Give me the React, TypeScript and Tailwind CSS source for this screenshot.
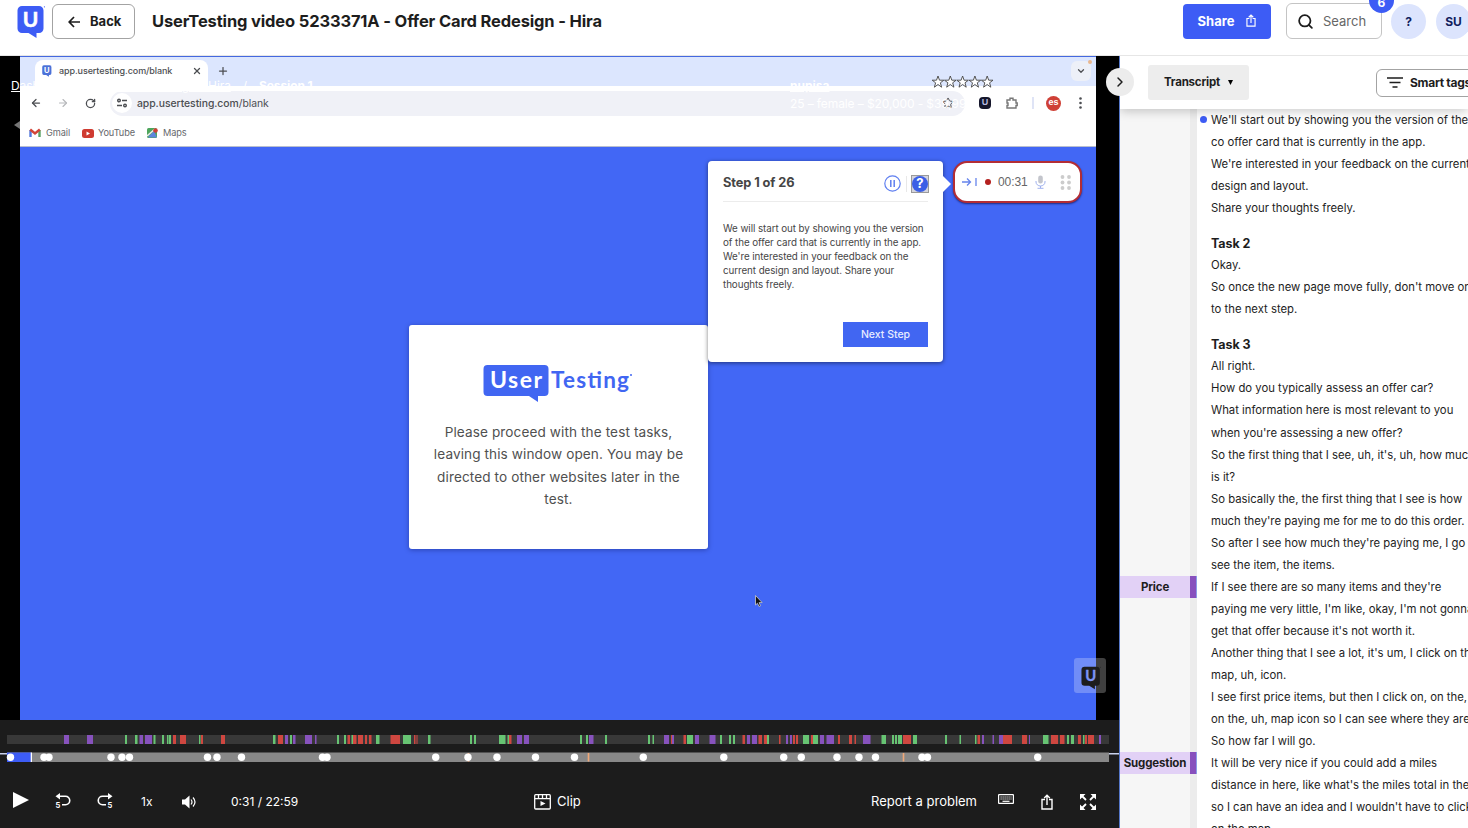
import { ArrowLeft, ArrowRight, ChevronDown, ChevronRight, Mic, Plus, RotateCw, Search, Star, X } from "lucide-react";

const COLORS: Record<string, string> = { g: "#67c473", r: "#cf4740", p: "#8752bd" };

// [kind, start, end]
const SEGMENTS: [string, number, number][] = [
  ["p", 64, 69], ["p", 87, 93], ["g", 125, 127], ["g", 135, 137.5], ["p", 139.5, 143], ["p", 145, 152],
  ["g", 153.5, 155.5], ["g", 162, 164], ["g", 167, 168.5], ["g", 169, 171], ["r", 173, 176], ["r", 180, 186],
  ["g", 199, 200.5], ["r", 201, 203], ["r", 221, 225], ["g", 273, 275.5], ["r", 278, 283], ["p", 285, 288],
  ["g", 290, 292], ["p", 293, 295.5], ["p", 305, 312], ["p", 315, 316.5], ["g", 337, 339], ["g", 344, 346],
  ["r", 347.5, 350], ["g", 351.5, 353], ["r", 353, 356.5], ["r", 358, 363], ["r", 365, 367], ["r", 369, 371.5],
  ["g", 376, 379.5], ["r", 390.5, 400], ["g", 403, 411], ["r", 414, 415.5], ["r", 416.5, 417.5], ["g", 428, 430.5],
  ["g", 470, 472], ["g", 474, 476], ["g", 499, 505.5], ["g", 507.5, 509], ["r", 509, 511.5], ["p", 517, 522],
  ["p", 524, 529], ["g", 580, 582], ["g", 586, 588], ["p", 589, 593.5], ["g", 605, 607], ["g", 648, 650],
  ["g", 652.5, 654], ["p", 664, 669], ["r", 671, 672], ["p", 672, 674], ["r", 683.5, 686], ["g", 687, 693],
  ["p", 695, 699], ["p", 709.5, 715.5], ["g", 720, 722], ["g", 729, 731], ["g", 733, 735], ["r", 742.5, 745],
  ["p", 747, 750], ["p", 752, 757], ["r", 758.5, 762], ["r", 764, 767], ["g", 767, 769], ["r", 779, 780.5],
  ["p", 786, 788], ["p", 790, 792], ["r", 793, 795], ["r", 796, 798], ["g", 803, 809], ["r", 811, 813],
  ["g", 813, 818], ["p", 820, 824], ["p", 826.5, 834], ["r", 838, 840], ["r", 849, 852], ["r", 854.5, 856],
  ["p", 863, 870.5], ["g", 881.5, 886], ["g", 892, 894], ["g", 895, 897], ["g", 898, 902], ["r", 903, 911],
  ["g", 913, 917], ["g", 945, 947], ["g", 959.5, 961], ["g", 975, 976.5], ["r", 977.5, 980], ["p", 982, 984],
  ["p", 992.5, 994], ["p", 999, 1003], ["r", 1003, 1012], ["r", 1022, 1027], ["p", 1029, 1030], ["g", 1043, 1048.5],
  ["r", 1051, 1058], ["r", 1060, 1064.5], ["g", 1067, 1069], ["g", 1071, 1074], ["r", 1078, 1081], ["g", 1083, 1084.5],
  ["r", 1085, 1087], ["r", 1088, 1094], ["p", 1099, 1101],
];

const DOTS = [
  10.5, 44, 49, 111, 122, 129.5, 207.5, 217, 241.5, 322.5, 327, 435.7, 468, 497, 535.5, 574.5, 643.3, 723.8, 783.7,
  801.3, 837, 859, 875.5, 922, 927.5, 1037.7,
];

const TRANSCRIPT = [
  {
    title: "",
    lines: [
      "We'll start out by showing you the version of the",
      "co offer card that is currently in the app.",
      "We're interested in your feedback on the current",
      "design and layout.",
      "Share your thoughts freely.",
    ],
  },
  {
    title: "Task 2",
    lines: ["Okay.", "So once the new page move fully, don't move on", "to the next step."],
  },
  {
    title: "Task 3",
    lines: [
      "All right.",
      "How do you typically assess an offer car?",
      "What information here is most relevant to you",
      "when you're assessing a new offer?",
      "So the first thing that I see, uh, it's, uh, how much",
      "is it?",
      "So basically the, the first thing that I see is how",
      "much they're paying me for me to do this order.",
      "So after I see how much they're paying me, I go",
      "see the item, the items.",
      "If I see there are so many items and they're",
      "paying me very little, I'm like, okay, I'm not gonna",
      "get that offer because it's not worth it.",
      "Another thing that I see a lot, it's um, I click on the",
      "map, uh, icon.",
      "I see first price items, but then I click on, on the,",
      "on the, uh, map icon so I can see where they are.",
      "So how far I will go.",
      "It will be very nice if you could add a miles",
      "distance in here, like what's the miles total in there",
      "so I can have an idea and I wouldn't have to click",
      "on the map.",
    ],
  },
];

function Logo({ className, fill, letter }: { className: string; fill: string; letter: string }) {
  return (
    <svg className={className} viewBox="0 0 28 34">
      <path d="M5 1h17a4.500 4.500 0 0 1 4.500 4.500v18a4.500 4.500 0 0 1-4.500 4.500h-2.500v5l-8-5H5a4.500 4.500 0 0 1-4.500-4.500v-18A4.500 4.500 0 0 1 5 1z" fill={fill} />
      <text x="13.500" y="21.500" textAnchor="middle" fontFamily="Lato" fontWeight="700" fontSize="21" fill={letter} stroke={letter} strokeWidth=".5">U</text>
      <circle cx="27.400" cy="1.800" r=".6" fill={fill} />
    </svg>
  );
}

function ShareIcon({ className }: { className: string }) {
  return (
    <svg className={className} viewBox="0 0 12 16" fill="none" stroke="currentColor" strokeWidth="1.400">
      <path d="M4 5.500H1v9.500h10V5.500H8M6 11V1.500M3.200 4 6 1.200 8.800 4" />
    </svg>
  );
}

function Header() {
  return (
    <header className="flex h-14 shrink-0 items-start border-b border-[#e6e6e6] pt-1">
      <Logo className="ml-[17px] mt-px h-[34px] w-7 shrink-0" fill="#3d5cf5" letter="#fff" />
      <button className="ml-[7px] flex h-[35px] w-[83px] items-center gap-2.5 rounded-md border border-[#a3a3a3] pl-[15px] text-[13px] font-bold">
        <svg className="h-3 w-3" viewBox="0 0 12 12" fill="none" stroke="currentColor" strokeWidth="1.700">
          <path d="M12 6H1.500M6 1 1.200 6 6 11" />
        </svg>
        Back
      </button>
      <h1 className="ml-[17px] mt-1 flex-1 whitespace-nowrap text-[16.5px] font-bold leading-[26px] tracking-[-0.15px]">
        UserTesting video 5233371A - Offer Card Redesign - Hira
      </h1>
      <button className="flex h-[35px] w-[88px] items-center justify-center gap-3 rounded-sm bg-[#3d5cf5] text-[13px] font-bold text-white">
        Share
        <ShareIcon className="mb-0.5 h-[13px] w-2.5" />
      </button>
      <div className="relative -mt-1 ml-[15px] flex h-[39px] w-24 items-center gap-[9px] rounded-md pl-[11px] pt-1">
        <div className="absolute inset-x-0 bottom-0 top-[3px] rounded-md border border-[#c4c4c4]" />
        <Search className="h-[17px] w-[17px]" strokeWidth={2.500} />
        <span className="text-[13px] text-[#666]">Search</span>
        <span className="absolute -right-3 -top-3 flex h-[25px] w-[25px] items-center justify-center rounded-full bg-[#3d5cf5] pt-1 text-[12px] font-bold text-white">
          6
        </span>
      </div>
      <span className="ml-[9px] flex h-[35px] w-[35px] items-center justify-center rounded-full bg-[#dce4fd] text-[12px] font-bold text-[#111d5e]">?</span>
      <span className="-mr-[3px] ml-2.5 flex h-[35px] w-[35px] items-center justify-center rounded-full bg-[#dce4fd] text-[12px] font-bold text-[#111d5e]">SU</span>
    </header>
  );
}

function BrowserChrome() {
  return (
    <div className="flex h-[90px] flex-col border-b border-[#b9bfcf] bg-white font-['Liberation_Sans'] text-[#4c4e52]">
      <div className="flex h-[29px] items-center bg-[#dce6fe] pl-[15px] pt-[3px]">
        <div className="flex h-[26px] w-[173px] items-center rounded-t-lg bg-white pl-[7px] text-[10px]">
          <Logo className="mb-1 h-3 w-2.5" fill="#4b71d8" letter="#fff" />
          <span className="ml-[7px] w-[113px] whitespace-nowrap pb-1 font-['Inter'] text-[9px] font-medium tracking-[-0.1px]">app.usertesting.com/blank</span>
          <X className="mb-1 ml-5 h-2.5 w-2.5 shrink-0" strokeWidth={3} />
        </div>
        <Plus className="mb-1 ml-[9px] h-3 w-3" strokeWidth={2.500} />
        <div className="mb-1 ml-auto mr-[5px] flex h-5 w-5 items-center justify-center rounded-md bg-[#edf0f8]">
          <ChevronDown className="h-2.5 w-2.5" strokeWidth={3} />
        </div>
      </div>
      <div className="flex h-[34px] items-center">
        <ArrowLeft className="ml-2.5 h-3 w-3" strokeWidth={2.500} />
        <ArrowRight className="ml-[15px] h-3 w-3 text-[#b6b8bb]" strokeWidth={2.300} />
        <RotateCw className="ml-4 h-[11px] w-[11px]" strokeWidth={2.800} />
        <div className="ml-3.5 flex h-[25px] w-[855px] items-center rounded-full bg-[#f0f1f7]">
          <span className="ml-0.5 flex h-5 w-5 items-center justify-center rounded-full bg-white">
            <svg className="h-2.5 w-2.5" viewBox="0 0 10 10" fill="none" stroke="currentColor" strokeWidth="1.400">
              <circle cx="2" cy="2.500" r="1.300" />
              <path d="M5 2.500h5M0 7.500h5" />
              <circle cx="8" cy="7.500" r="1.300" />
            </svg>
          </span>
          <span className="ml-[5px] pt-px font-['Inter'] text-[10.4px] tracking-[-0.05px]">
            <b className="font-medium">app.usertesting.com</b>/blank
          </span>
          <Star className="ml-auto mr-[11px] h-3 w-3" strokeWidth={2} />
        </div>
        <span className="ml-3.5 flex h-3 w-3 items-center justify-center rounded-sm bg-[#15162b] text-[9px] font-bold text-[#b7bbe0]">U</span>
        <svg className="ml-[15px] h-3 w-3 text-[#777]" viewBox="0 0 12 12" fill="none" stroke="currentColor" strokeWidth="1.400">
          <path d="M1 3h3V1.200h3V3h3v3h1.200v2.500H10V11H1V8.500h1V6H1z" />
        </svg>
        <span className="ml-3.5 h-3 w-0.5 bg-[#dfe4f6]" />
        <span className="ml-3 flex h-[15px] w-[15px] items-center justify-center rounded-full bg-[#cf4036] text-[9px] font-bold text-white">es</span>
        <svg className="ml-[18px] h-3 w-[3px]" viewBox="0 0 3 12" fill="currentColor">
          <circle cx="1.500" cy="1.500" r="1.300" />
          <circle cx="1.500" cy="6" r="1.300" />
          <circle cx="1.500" cy="10.500" r="1.300" />
        </svg>
      </div>
      <div className="flex h-[26px] items-center pl-[9px] font-['Inter'] text-[9.2px] tracking-[-0.1px] text-[#66686c]">
        <svg className="h-2.5 w-3" viewBox="0 0 12 10" fill="none" strokeWidth="2.400">
          <path d="M1.500 9V2" stroke="#5279dc" />
          <path d="M10.500 9V2" stroke="#58a164" />
          <path d="M1.200 1.500 6 5.500l4.800-4" stroke="#d24438" />
        </svg>
        <span className="ml-[5px] w-[25px]">Gmail</span>
        <svg className="ml-[11px] h-[9px] w-3" viewBox="0 0 12 9">
          <rect width="12" height="9" rx="2.500" fill="#cf3b31" />
          <path d="M4.500 2.500v4L8 4.500z" fill="#fff" />
        </svg>
        <span className="ml-1 w-9">YouTube</span>
        <svg className="ml-[13px] h-2.5 w-[11px]" viewBox="0 0 11 10">
          <rect width="10" height="10" rx="1.500" fill="#4ea65c" />
          <path d="M1 9 7 3l3 6.500H2z" fill="#5d86dd" />
          <path d="M0 8 8 1" stroke="#eee" strokeWidth="1.600" />
          <circle cx="8.500" cy="2.500" r="2.300" fill="#cf4036" />
        </svg>
        <span className="ml-[5px]">Maps</span>
      </div>
    </div>
  );
}

function StepPopup() {
  return (
    <div className="absolute left-[688px] top-[104px] flex items-start">
      <div className="h-[201px] w-[235px] rounded-sm bg-white px-[15px] text-[#454545] shadow-[0_1px_4px_rgba(0,0,0,0.5)]">
        <div className="flex h-[41px] items-center border-b border-[#ececec] pt-[5px]">
          <span className="flex-1 pb-0.5 text-[12.8px] font-bold tracking-[-0.1px]">Step 1 of 26</span>
          <svg className="h-[17px] w-[17px]" viewBox="0 0 17 17" fill="none" stroke="#5f7ff0">
            <circle cx="8.500" cy="8.500" r="7.700" strokeWidth="1.200" />
            <path d="M6.800 5v7M10.200 5v7" strokeWidth="1.500" />
          </svg>
          <span className="ml-[5px] h-4 w-px bg-[#e8e8e8]" />
          <span className="-mr-px ml-1 flex h-[18px] w-[18px] items-center justify-center border border-[#9a9a9a] bg-[#d4d4dc]">
            <span className="flex h-4 w-4 shrink-0 items-center justify-center rounded-full bg-[#3c5fe6] text-[13px] font-bold leading-none text-white">?</span>
          </span>
        </div>
        <p className="whitespace-nowrap pt-[19.5px] text-[9.8px] leading-[14.2px] tracking-[-0.07px]">
          We will start out by showing you the version<br />
          of the offer card that is currently in the app.<br />
          We're interested in your feedback on the<br />
          current design and layout. Share your<br />
          thoughts freely.
        </p>
        <button className="ml-[120px] mt-[29.5px] flex h-[25px] w-[85px] items-center justify-center bg-[#4166f2] text-[10.5px] font-medium text-[#e7ecff]">
          Next Step
        </button>
      </div>
      <svg className="mt-[15px] h-4 w-2" viewBox="0 0 8 16"><path d="M0 0l8 8-8 8z" fill="#fff" /></svg>
      <div className="ml-0.5 flex h-[42px] w-[129px] items-center rounded-[14px] border-2 border-[#b32d35] bg-white pl-[7px] text-[#666] shadow-[0_1px_2px_rgba(0,0,50,0.6)]">
        <svg className="h-2.5 w-4" viewBox="0 0 16 10" fill="none" stroke="#6684ec" strokeWidth="1.300">
          <path d="M0 5h8.500M5 1.500 8.500 5 5 8.500M14 1v8" />
        </svg>
        <span className="ml-[7px] h-1.5 w-1.5 rounded-full bg-[#b4201f]" />
        <span className="ml-[7px] w-[29px] font-['Liberation_Sans'] text-[12px] tracking-[-0.1px]">00:31</span>
        <svg className="ml-2 h-[14px] w-[11px]" viewBox="0 0 11 14" fill="none" stroke="#9fb1ee" strokeWidth="1">
          <rect x="3.200" y=".5" width="4.600" height="8" rx="2.300" fill="#c3c5cc" stroke="none" />
          <path d="M1 6v1a4.500 4 0 0 0 9 0V6M5.500 11v2M2.500 13.300h6" />
        </svg>
        <svg className="ml-3.5 h-[15px] w-3 fill-[#ccc]" viewBox="0 0 12 15">
          {[2, 7.5, 13].map((y) => (
            <g key={y}>
              <circle cx="2.500" cy={y} r="1.900" />
              <circle cx="9" cy={y} r="1.900" />
            </g>
          ))}
        </svg>
      </div>
    </div>
  );
}

function Player() {
  return (
    <div className="relative h-[664px] bg-black pl-5 pr-[23px]">
      <div className="relative h-full border-t border-[#4468df] bg-[#4267f5]">
        <BrowserChrome />
        <div className="absolute left-[389px] top-[268px] flex h-[224px] w-[299px] flex-col items-center rounded-[3px] bg-white pt-[39px] text-[#505050] shadow-[0_1px_5px_rgba(0,0,60,0.35)]">
          <div className="-ml-0.5 flex items-start text-[#4166f2]">
            <svg className="h-[38px] w-[66px]" viewBox="0 0 66 38">
              <path d="M4.500 1h57a4 4 0 0 1 4 4v23a4 4 0 0 1-4 4H55v6l-9-6H4.500a4 4 0 0 1-4-4V5a4 4 0 0 1 4-4z" fill="#4166f2" />
              <text x="7" y="24" textLength="52" fontFamily="Lato" fontWeight="700" fontSize="23" fill="#fff">User</text>
            </svg>
            <svg className="h-[38px] w-[84px]" viewBox="0 0 84 38">
              <text x="2" y="24" textLength="78" fontFamily="Lato" fontWeight="700" fontSize="22.500" fill="#4166f2">Testing</text>
              <circle cx="82" cy="11" r="1" fill="#4166f2" />
            </svg>
          </div>
          <p className="whitespace-nowrap pt-[19px] text-center text-[13.6px] leading-[22.3px] tracking-[0.1px]">
            Please proceed with the test tasks,<br />
            leaving this window open. You may be<br />
            directed to other websites later in the<br />
            test.
          </p>
        </div>
        <StepPopup />
        <svg className="absolute left-[735px] top-[538px] h-3 w-2" viewBox="0 0 8 12">
          <path d="M.5.5v9.500l2-1.800L4 11.500l1.500-.7-1.400-3.200h3z" fill="#111" stroke="#ccc" strokeWidth=".8" />
        </svg>
      </div>

      {/* session details laid over the video */}
      <div className="absolute left-[11px] top-[22px] whitespace-nowrap text-[12px] leading-4 tracking-[-0.1px] text-white">
        <span className="underline">Dashboard / Offer Card Redesign - Hira</span>
        <span className="mx-3">/</span>
        <b>Session 1</b>
      </div>
      <div className="absolute left-[790px] top-[22px] whitespace-nowrap text-white">
        <div className="text-[12px] font-bold leading-4 underline">nupisa</div>
        <div className="mt-0.5 text-[12px] leading-4 tracking-[-0.1px]">25 – female – $20,000 - $39,999</div>
      </div>
      <svg className="absolute left-[932px] top-[19px] h-[13px] w-[62px]" viewBox="0 0 62 13" fill="#fff" stroke="#444" strokeWidth=".9">
        {[6, 18.3, 30.600, 42.900, 55.200].map((x) => (
          <path key={x} transform={`translate(${x} 7)`} d="M0-6 1.500-1.800H5.800L2.400.8 3.600 5.200 0 2.500-3.600 5.200-2.400.8-5.800-1.800H-1.500z" />
        ))}
      </svg>
      <span className="absolute left-[1088px] top-1 h-1 w-1 rounded-full bg-[#e9b88e]" />
      <svg className="absolute left-3.5 top-[65px] h-2 w-1.5" viewBox="0 0 6 8"><path d="M6 0v8L0 4z" fill="#777" /></svg>
      <div className="absolute left-[1074px] top-[602px] flex h-[35px] w-8 items-center justify-center rounded-[3px] bg-white/25">
        <Logo className="ml-0.5 mt-1 h-6 w-5" fill="#1d1d1d" letter="#7d94f5" />
      </div>
    </div>
  );
}

function SkipIcon({ forward }: { forward?: boolean }) {
  return (
    <svg className="h-4 w-4" viewBox="0 0 16 16" fill="none" stroke="#fff" strokeWidth="1.600">
      {forward ? (
        <>
          <path d="M12 3.200H5.500a4.200 4.200 0 0 0 0 8.500H9" />
          <path d="M11 0l4.500 3.200L11 6.400z" fill="#fff" stroke="none" />
        </>
      ) : (
        <>
          <path d="M4 3.200h6.500a4.200 4.200 0 0 1 0 8.500H7" />
          <path d="M5 0 .5 3.200 5 6.400z" fill="#fff" stroke="none" />
        </>
      )}
      <text x={forward ? 10.5 : 0.5} y="14.500" fill="#fff" stroke="none" fontFamily="Inter" fontWeight="700" fontSize="7.500">5</text>
    </svg>
  );
}

function Controls() {
  return (
    <div className="flex h-[108px] flex-col bg-[#1c1c1c] text-white">
      <svg className="h-[46px] w-full shrink-0" viewBox="0 720 1119 46">
        <rect x="7" y="735" width="1102" height="9" fill="#383838" />
        {SEGMENTS.map(([kind, from, to]) => (
          <rect key={from} x={from} y="735" width={to - from} height="9" fill={COLORS[kind]} />
        ))}
        <rect x="0" y="753" width="1119" height="1.500" fill="#c9d2ec" />
        <rect x="7" y="752.500" width="1102" height="9.500" fill="#888" />
        <rect x="7" y="752.500" width="24" height="9.500" fill="#3d5cf5" />
        <rect x="30.700" y="752.500" width="1.300" height="9.500" fill="#fff" />
        {[468.5, 588.5, 903.5].map((x) => (
          <rect key={x} x={x - 0.8} y="753" width="1.600" height="8.500" fill="#f0a878" />
        ))}
        {DOTS.map((x) => (
          <circle key={x} cx={x} cy="757.300" r="3.700" fill="#fff" />
        ))}
      </svg>
      <div className="flex h-[71px] shrink-0 items-center pl-[13px] pr-[23px] text-[13px]">
        <svg className="mb-1 h-4 w-4" viewBox="0 0 16 16"><path d="M0 0l16 8-16 8z" fill="#fff" /></svg>
        <span className="mb-0.5 ml-[26px]"><SkipIcon /></span>
        <span className="mb-0.5 ml-[26px]"><SkipIcon forward /></span>
        <span className="ml-7 w-3.5 text-[12px]">1x</span>
        <svg className="ml-[27px] h-3.5 w-3.5" viewBox="0 0 14 14" fill="none" stroke="#fff" strokeWidth="1.200">
          <path d="M0 4.500h3L7.500.5v13L3 9.500H0z" fill="#fff" stroke="none" />
          <path d="M9 4.500q2 2.500 0 5M11 2.500q4 4.500 0 9" />
        </svg>
        <span className="ml-[35px] w-[68px] whitespace-nowrap text-[12px]">0:31 / 22:59</span>
        <svg className="ml-[235px] h-4 w-[17px] shrink-0" viewBox="0 0 17 16" fill="none" stroke="#fff" strokeWidth="1.300">
          <rect x=".7" y=".7" width="15.600" height="14.300" rx="1" />
          <path d="M.7 4.700h15.600M4.500.7v4M8.500.7v4M12.500.7v4" />
          <path d="M6.500 7v5l5-2.500z" fill="#fff" stroke="none" />
        </svg>
        <span className="ml-1.5">Clip</span>
        <span className="ml-auto whitespace-nowrap">Report a problem</span>
        <svg className="mb-1.5 ml-[21px] h-2.5 w-4" viewBox="0 0 16 10" fill="none" stroke="#fff" strokeWidth="1.200">
          <rect x=".6" y=".6" width="14.800" height="8.800" rx=".5" />
          <path d="M2.500 3h11M2.500 5h11" strokeDasharray="1.200 .8" />
          <path d="M4.500 7.300h7" />
        </svg>
        <ShareIcon className="ml-[27px] h-4 w-3" />
        <svg className="ml-[27px] h-4 w-4" viewBox="0 0 16 16" fill="#fff" stroke="#fff" strokeWidth="1.800">
          <path d="M1.500 1.500l4.500 4.500M14.500 1.500l-4.500 4.500M1.500 14.500l4.500-4.500M14.500 14.500l-4.500-4.500" />
          <path d="M0 0h5.500L0 5.500zM16 0v5.500L10.500 0zM0 16v-5.500L5.500 16zM16 16h-5.500L16 10.500z" stroke="none" />
        </svg>
      </div>
    </div>
  );
}

function Tag({ label }: { label: string }) {
  return (
    <div className="flex h-[22px] w-[77px] shrink-0 bg-[#e2d1f6] text-[11.5px] font-bold">
      <span className="flex w-[70px] items-center justify-center pt-px tracking-[-0.15px]">{label}</span>
      <span className="w-[7px] border-r border-[#8b9be6] bg-[#8850bd]" />
    </div>
  );
}

function TranscriptPanel() {
  return (
    <aside className="relative flex min-w-0 flex-1 flex-col overflow-hidden">
      <div className="relative z-10 flex h-[53px] shrink-0 items-center bg-white pl-7 shadow-[0_2px_10px_rgba(0,0,0,0.22)]">
        <button className="flex h-[35px] w-[101px] shrink-0 items-center justify-center gap-2 rounded-[3px] bg-[#ededed] text-[11.5px] font-bold tracking-[-0.2px]">
          Transcript
          <svg className="h-[5px] w-[5px]" viewBox="0 0 5 5"><path d="M0 0h5L2.500 5z" /></svg>
        </button>
        <button className="ml-[127px] flex h-7 w-[130px] shrink-0 items-center gap-[7px] whitespace-nowrap rounded-md border border-[#a3a3a3] pl-2.5 text-[12px] font-bold tracking-[-0.3px]">
          <svg className="h-[11px] w-4" viewBox="0 0 16 11" stroke="currentColor" strokeWidth="1.400">
            <path d="M0 1h16M2.500 5.500h11M5.500 10h5" />
          </svg>
          Smart tags
        </button>
      </div>
      <div className="flex min-h-0 flex-1">
        <div className="flex w-[77px] shrink-0 flex-col bg-[linear-gradient(to_right,#f6f6f6_70px,#ececec_70px)] pt-[467px]">
          <Tag label="Price" />
          <div className="h-[154px] shrink-0" />
          <Tag label="Suggestion" />
        </div>
        <div className="relative -mt-[0.4px] ml-3.5 whitespace-nowrap text-[11.3px] leading-[22.05px]">
          <span className="absolute -left-[11px] top-[7px] h-[7px] w-[7px] rounded-full bg-[#3d5cf5]" />
          {TRANSCRIPT.map((section) => (
            <section key={section.title} className="mb-3.5">
              {section.title && <h2 className="text-[12.5px] font-bold leading-[21.2px] tracking-[-0.1px]">{section.title}</h2>}
              {section.lines.map((line) => (
                <p key={line}>{line}</p>
              ))}
            </section>
          ))}
        </div>
      </div>
    </aside>
  );
}

export default function App() {
  return (
    <div className="flex h-[828px] w-[1468px] flex-col overflow-hidden bg-white font-['Inter',sans-serif] text-[#1d1d1d]">
      <Header />
      <div className="flex h-[772px]">
        <main className="relative w-[1120px] shrink-0 border-r border-[#5577c8]">
          <Player />
          <Controls />
          <button className="absolute left-[1106px] top-3 z-20 flex h-7 w-7 items-center justify-center rounded-full bg-[#ececec]">
            <ChevronRight className="h-4 w-4" strokeWidth={2.200} />
          </button>
        </main>
        <TranscriptPanel />
      </div>
    </div>
  );
}
